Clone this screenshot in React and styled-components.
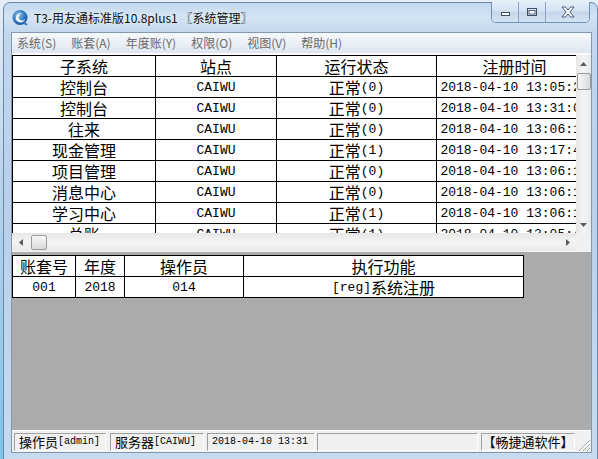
import React from 'react';
import styled, { createGlobalStyle } from 'styled-components';

const Global = createGlobalStyle`
  html, body { margin: 0; padding: 0; }
  body { width: 598px; height: 459px; overflow: hidden; background: #b8d3ea; }
`;

const Desktop = styled.div`
  width: 598px;
  height: 459px;
  overflow: hidden;
  background: linear-gradient(180deg, #e4eef7 0%, #b8d3ea 40%, #7fc3e8 100%);
`;

const Window = styled.div`
  box-sizing: border-box;
  width: 595px;
  height: 458px;
  margin: 2px 0 0 3px;
  border: 1px solid #6b87ab;
  border-radius: 7px 7px 0 0;
  padding: 0 5px 6px 7px;
  display: flex;
  flex-direction: column;
  background: linear-gradient(180deg, #c3d9ef 0px, #d2e3f4 14px, #c2d7ed 30px, #b9d0e9 200px, #c6dbef 100%);
`;

const TitleBar = styled.div`
  height: 29px;
  display: flex;
  align-items: flex-start;
  flex: none;
`;

const Logo = styled.svg`
  width: 17px;
  height: 17px;
  margin: 6px 0 0 1px;
  flex: none;
`;

const TitleText = styled.div`
  margin: 7px 0 0 5px;
  font-family: "Noto Sans CJK SC", "Noto Sans", sans-serif;
  font-size: 12px;
  line-height: 16px;
  color: #111;
  text-shadow: 0 0 6px rgba(255, 255, 255, 0.9);
  white-space: nowrap;
`;

const Controls = styled.div`
  margin: -1px 2px 0 auto;
  display: flex;
  height: 20px;
  border: 1px solid #7590b5;
  border-top: none;
  border-radius: 0 0 5px 5px;
  overflow: hidden;
  box-shadow: inset 0 0 0 1px rgba(255, 255, 255, 0.6);
`;

const CtrlBtn = styled.div`
  width: ${(p) => p.$w}px;
  display: flex;
  align-items: center;
  justify-content: center;
  background: linear-gradient(180deg, #e3edf8 0%, #d3e2f2 45%, #c4d6ea 50%, #d4e3f3 100%);
  border-left: ${(p) => (p.$first ? 'none' : '1px solid #8aa3c4')};
`;

const Client = styled.div`
  flex: 1;
  display: flex;
  flex-direction: column;
  border: 1px solid #8597b0;
  background: #f0f0f0;
  min-height: 0;
`;

const MenuBar = styled.div`
  height: 20px;
  flex: none;
  display: flex;
  align-items: center;
  gap: 15px;
  padding-left: 5px;
  background: linear-gradient(180deg, #f5f8fb 0%, #e9eef5 60%, #dfe6ef 100%);
  font-family: "Noto Sans CJK SC", "Noto Sans", sans-serif;
  font-size: 12px;
  color: #6a6a6a;
`;

const MenuItem = styled.span`
  white-space: nowrap;
  line-height: 20px;
`;

const Sep = styled.div`
  height: 2px;
  flex: none;
  background: #fafafa;
`;

const ListRow = styled.div`
  display: flex;
  height: 178px;
  flex: none;
`;

const Viewport = styled.div`
  width: 564px;
  height: 178px;
  overflow: hidden;
  background: #fff;
`;

const Grid = styled.div`
  display: grid;
  grid-template-columns: ${(p) => p.$cols};
  grid-auto-rows: 21px;
  width: max-content;
  border-left: 1px solid #000;
  border-top: 1px solid #000;
  background: #fff;
`;

const Cell = styled.div`
  box-sizing: border-box;
  border-right: 1px solid #000;
  border-bottom: 1px solid #000;
  display: flex;
  align-items: center;
  justify-content: center;
  white-space: nowrap;
  overflow: hidden;
  font-family: "Liberation Mono", "Noto Sans CJK SC", monospace;
  font-size: 13px;
  color: #000;
  line-height: 1;
`;

const Han = styled.span`
  font-family: "Noto Sans CJK SC", sans-serif;
  font-size: ${(p) => p.$size || 16}px;
  line-height: 1;
  font-weight: 400;
`;

const VScroll = styled.div`
  width: 15px;
  height: 178px;
  display: flex;
  flex-direction: column;
  background: linear-gradient(90deg, #e6e6e6 0%, #f4f4f4 50%, #e9e9e9 100%);
`;

const HScrollRow = styled.div`
  display: flex;
  height: 18px;
  flex: none;
`;

const HScroll = styled.div`
  width: 564px;
  height: 18px;
  display: flex;
  align-items: center;
  background: linear-gradient(180deg, #e6e6e6 0%, #f4f4f4 50%, #e9e9e9 100%);
`;

const Corner = styled.div`
  width: 15px;
  height: 18px;
  background: #f0f0f0;
`;

const Arrow = styled.div`
  width: ${(p) => p.$w}px;
  height: ${(p) => p.$h}px;
  display: flex;
  align-items: center;
  justify-content: center;
  flex: none;
`;

const Thumb = styled.div`
  box-sizing: border-box;
  width: ${(p) => p.$w}px;
  height: ${(p) => p.$h}px;
  margin: ${(p) => p.$m};
  border: 1px solid #9c9c9c;
  border-radius: 2px;
  background: ${(p) =>
    p.$v
      ? 'linear-gradient(90deg, #f6f6f6 0%, #e9e9e9 50%, #d8d8d8 100%)'
      : 'linear-gradient(180deg, #f6f6f6 0%, #e9e9e9 50%, #d8d8d8 100%)'};
  flex: none;
`;

const Spacer = styled.div`
  flex: 1;
`;

const GrayArea = styled.div`
  flex: 1;
  background: #ababab;
  padding-top: 3px;
  border-top: 1px solid #f4f4f4;
  box-sizing: border-box;
`;

const StatusBar = styled.div`
  height: 22px;
  flex: none;
  display: flex;
  align-items: center;
  padding-left: 2px;
  background: #f0f0f0;
  border-top: 1px solid #fff;
  box-sizing: border-box;
`;

const Panel = styled.div`
  box-sizing: border-box;
  width: ${(p) => p.$w}px;
  margin-left: ${(p) => p.$ml || 0}px;
  height: 18px;
  border: 1px solid;
  border-color: #a0a0a0 #ffffff #ffffff #a0a0a0;
  display: flex;
  align-items: center;
  justify-content: ${(p) => (p.$center ? 'center' : 'flex-start')};
  padding: 0 4px;
  white-space: nowrap;
  overflow: hidden;
  font-family: "Liberation Mono", "Noto Sans CJK SC", monospace;
  font-size: 10px;
  color: #000;
`;

const Grip = styled.svg`
  width: 15px;
  height: 15px;
  margin: 4px 0 0 1px;
  align-self: flex-end;
`;

const rows = [
  ['控制台', '正常', '(0)', '13:05:28'],
  ['控制台', '正常', '(0)', '13:31:07'],
  ['往来', '正常', '(0)', '13:06:12'],
  ['现金管理', '正常', '(1)', '13:17:45'],
  ['项目管理', '正常', '(0)', '13:06:13'],
  ['消息中心', '正常', '(0)', '13:06:14'],
  ['学习中心', '正常', '(1)', '13:06:15'],
  ['总账', '正常', '(1)', '13:05:40'],
];

function UpTri() {
  return (
    <svg width="7" height="4" viewBox="0 0 7 4">
      <path d="M0 4 L3.5 0 L7 4 Z" fill="#5a5a5a" />
    </svg>
  );
}
function DownTri() {
  return (
    <svg width="7" height="4" viewBox="0 0 7 4">
      <path d="M0 0 L3.5 4 L7 0 Z" fill="#5a5a5a" />
    </svg>
  );
}
function LeftTri() {
  return (
    <svg width="4" height="7" viewBox="0 0 4 7">
      <path d="M4 0 L0 3.5 L4 7 Z" fill="#5a5a5a" />
    </svg>
  );
}
function RightTri() {
  return (
    <svg width="4" height="7" viewBox="0 0 4 7">
      <path d="M0 0 L4 3.5 L0 7 Z" fill="#5a5a5a" />
    </svg>
  );
}

export default function App() {
  return (
    <>
      <Global />
      <Desktop>
        <Window>
          <TitleBar>
            <Logo viewBox="0 0 17 17">
              <defs>
                <radialGradient id="lg" cx="40%" cy="35%" r="70%">
                  <stop offset="0%" stopColor="#8fc4ee" />
                  <stop offset="60%" stopColor="#2f78c2" />
                  <stop offset="100%" stopColor="#1c4f8f" />
                </radialGradient>
              </defs>
              <circle cx="8" cy="8.5" r="7.5" fill="url(#lg)" />
              <path d="M4 11 C3 7 6 3.5 10 4.5 C7.5 5 6 7 7 9.5 C8 12 11.5 12 13 10 C12.5 13.5 7 15 4 11 Z" fill="#ffffff" opacity="0.9" />
              <path d="M11 13 L15 16" stroke="#2f78c2" strokeWidth="2" />
            </Logo>
            <TitleText>T3-用友通标准版10.8plus1 〖系统管理〗</TitleText>
            <Controls>
              <CtrlBtn $w={26} $first>
                <svg width="11" height="10" viewBox="0 0 11 10">
                  <rect x="1.5" y="5.5" width="8" height="3" fill="#fff" stroke="#3d4f66" />
                </svg>
              </CtrlBtn>
              <CtrlBtn $w={26}>
                <svg width="12" height="10" viewBox="0 0 12 10">
                  <rect x="1.5" y="1.5" width="9" height="7" fill="none" stroke="#3d4f66" />
                  <rect x="3" y="3.5" width="6" height="3.5" fill="#fff" stroke="#3d4f66" strokeWidth="0.8" />
                </svg>
              </CtrlBtn>
              <CtrlBtn $w={43}>
                <svg width="14" height="12" viewBox="0 0 14 12">
                  <path
                    d="M1 1 H4.5 L7 4 L9.5 1 H13 L9 6 L13 11 H9.5 L7 8 L4.5 11 H1 L5 6 Z"
                    fill="#f4f7fb"
                    stroke="#4a5d78"
                    strokeWidth="1"
                    strokeLinejoin="round"
                  />
                </svg>
              </CtrlBtn>
            </Controls>
          </TitleBar>
          <Client>
            <MenuBar>
              <MenuItem>系统(S)</MenuItem>
              <MenuItem>账套(A)</MenuItem>
              <MenuItem>年度账(Y)</MenuItem>
              <MenuItem>权限(O)</MenuItem>
              <MenuItem>视图(V)</MenuItem>
              <MenuItem>帮助(H)</MenuItem>
            </MenuBar>
            <Sep />
            <ListRow>
              <Viewport>
                <Grid $cols="143px 121px 160px 156px">
                  <Cell><Han>子系统</Han></Cell>
                  <Cell><Han>站点</Han></Cell>
                  <Cell><Han>运行状态</Han></Cell>
                  <Cell><Han>注册时间</Han></Cell>
                  {rows.map((r, i) => (
                    <React.Fragment key={i}>
                      <Cell><Han>{r[0]}</Han></Cell>
                      <Cell>CAIWU</Cell>
                      <Cell><Han>{r[1]}</Han>{r[2]}</Cell>
                      <Cell>{'2018-04-10 ' + r[3]}</Cell>
                    </React.Fragment>
                  ))}
                </Grid>
              </Viewport>
              <VScroll>
                <Arrow $w={15} $h={17}><UpTri /></Arrow>
                <Thumb $v $w={14} $h={17} $m="1px 0 0 1px" />
                <Spacer />
                <Arrow $w={15} $h={17}><DownTri /></Arrow>
              </VScroll>
            </ListRow>
            <HScrollRow>
              <HScroll>
                <Arrow $w={17} $h={18}><LeftTri /></Arrow>
                <Thumb $w={16} $h={15} $m="0 0 0 2px" />
                <Spacer />
                <Arrow $w={17} $h={18}><RightTri /></Arrow>
              </HScroll>
              <Corner />
            </HScrollRow>
            <GrayArea>
              <Grid $cols="63px 49px 119px 280px">
                <Cell><Han>账套号</Han></Cell>
                <Cell><Han>年度</Han></Cell>
                <Cell><Han>操作员</Han></Cell>
                <Cell><Han>执行功能</Han></Cell>
                <Cell>001</Cell>
                <Cell>2018</Cell>
                <Cell>014</Cell>
                <Cell>[reg]<Han>系统注册</Han></Cell>
              </Grid>
            </GrayArea>
            <StatusBar>
              <Panel $w={92}><Han $size={13}>操作员</Han>[admin]</Panel>
              <Panel $w={94} $ml={4}><Han $size={13}>服务器</Han>[CAIWU]</Panel>
              <Panel $w={108} $ml={3}>2018-04-10 13:31</Panel>
              <Panel $w={161} $ml={2} />
              <Panel $w={94} $ml={3} $center><Han $size={13}>【畅捷通软件】</Han></Panel>
              <Grip viewBox="0 0 15 15">
                <path d="M14 3 L3 14 M14 7 L7 14 M14 11 L11 14" stroke="#a8a8a8" strokeWidth="1" />
                <path d="M14 4 L4 14 M14 8 L8 14 M14 12 L12 14" stroke="#ffffff" strokeWidth="1" />
              </Grip>
            </StatusBar>
          </Client>
        </Window>
      </Desktop>
    </>
  );
}
